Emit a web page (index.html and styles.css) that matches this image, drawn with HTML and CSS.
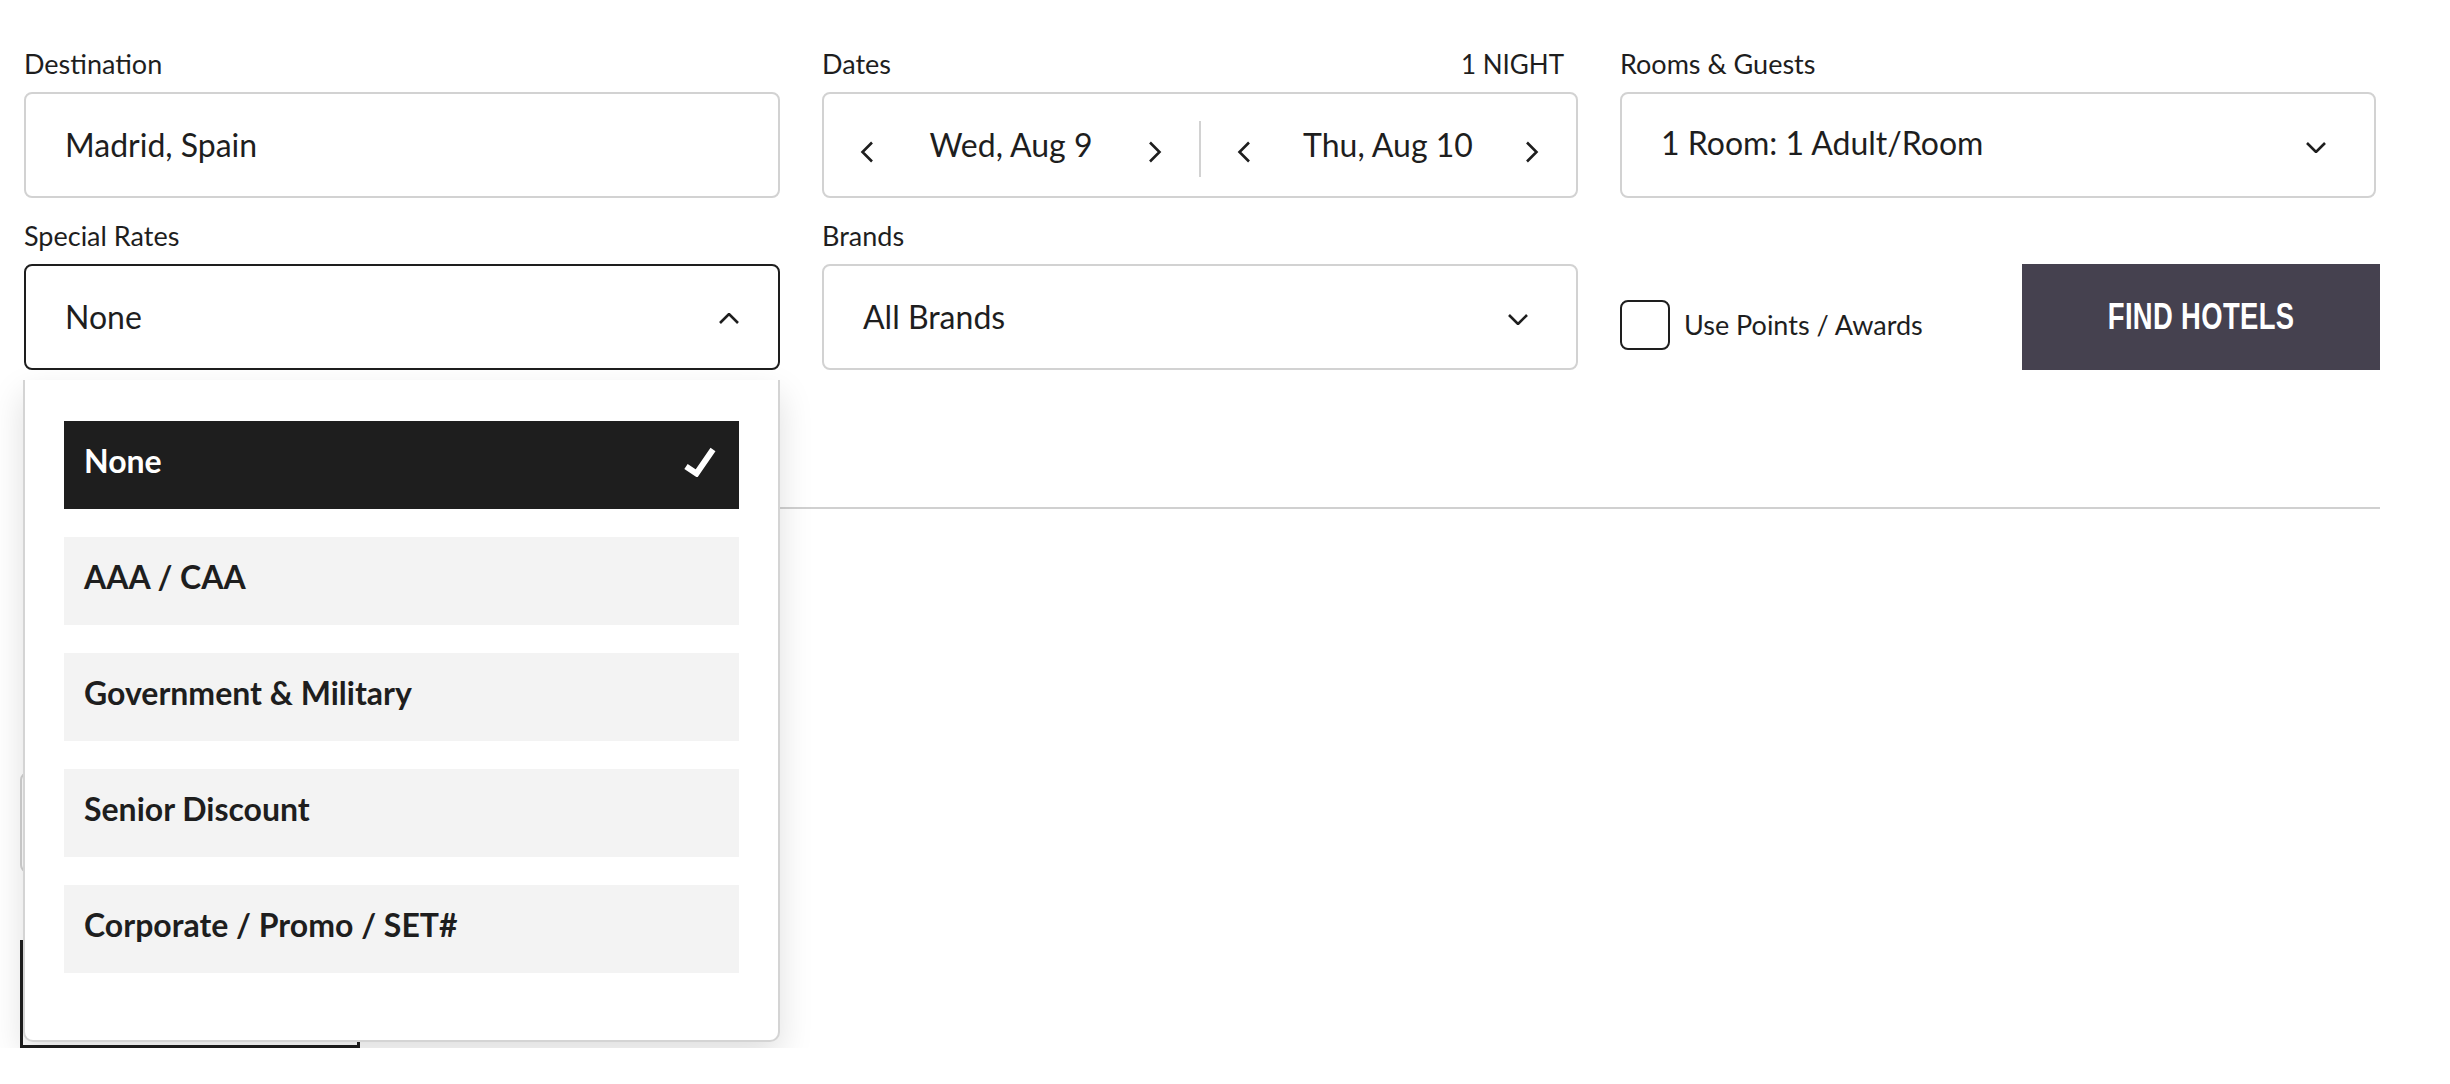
FILE: index.html
```
<!DOCTYPE html>
<html lang="en">
<head>
<meta charset="utf-8">
<title>Find Hotels</title>
<link rel="stylesheet" href="styles.css">
</head>
<body>
<div class="page">
  <form class="search">
    <div class="grid">
      <div class="field">
        <div class="label-row"><span class="label">Destination</span></div>
        <div class="box"><span class="value">Madrid, Spain</span></div>
      </div>

      <div class="field">
        <div class="label-row"><span class="label">Dates</span><span class="label nights">1 NIGHT</span></div>
        <div class="box dates">
          <div class="date-half">
            <svg class="chev-side" viewBox="0 0 14 22" width="14" height="22"><path d="M12 1.5 L2.5 11 L12 20.5"/></svg>
            <span class="date">Wed, Aug 9</span>
            <svg class="chev-side" viewBox="0 0 14 22" width="14" height="22"><path d="M2 1.5 L11.5 11 L2 20.5"/></svg>
          </div>
          <div class="divider"></div>
          <div class="date-half">
            <svg class="chev-side" viewBox="0 0 14 22" width="14" height="22"><path d="M12 1.5 L2.5 11 L12 20.5"/></svg>
            <span class="date">Thu, Aug 10</span>
            <svg class="chev-side" viewBox="0 0 14 22" width="14" height="22"><path d="M2 1.5 L11.5 11 L2 20.5"/></svg>
          </div>
        </div>
      </div>

      <div class="field">
        <div class="label-row"><span class="label">Rooms &amp; Guests</span></div>
        <div class="box select"><span class="value raised">1 Room: 1 Adult/Room</span>
          <svg class="chev" viewBox="0 0 20 11" width="20" height="11"><path d="M1 1 L10 10 L19 1"/></svg>
        </div>
      </div>

      <div class="field special">
        <div class="label-row"><span class="label">Special Rates</span></div>
        <div class="box select open"><span class="value">None</span>
          <svg class="chev chev-up" viewBox="0 0 20 11" width="20" height="11"><path d="M1 10 L10 1 L19 10"/></svg>
        </div>
        <ul class="menu">
          <li class="option selected"><span>None</span>
            <svg class="check" viewBox="0 0 32 30" width="32" height="30"><path d="M2 19.5 L12.5 26.5 L29 2.5"/></svg>
          </li>
          <li class="option"><span>AAA / CAA</span></li>
          <li class="option"><span>Government &amp; Military</span></li>
          <li class="option"><span>Senior Discount</span></li>
          <li class="option"><span>Corporate / Promo / SET#</span></li>
        </ul>
      </div>

      <div class="field">
        <div class="label-row"><span class="label">Brands</span></div>
        <div class="box select"><span class="value">All Brands</span>
          <svg class="chev" viewBox="0 0 20 11" width="20" height="11"><path d="M1 1 L10 10 L19 1"/></svg>
        </div>
      </div>

      <div class="field actions">
        <label class="points"><span class="checkbox"></span><span class="points-text">Use Points / Awards</span></label>
        <button type="button" class="find"><span class="find-text">FIND HOTELS</span></button>
      </div>
    </div>

    <div class="rule"></div>

    <div class="below">
      <div class="ghost-input"></div>
      <div class="ghost-button"></div>
    </div>
  </form>
</div>
</body>
</html>
```
FILE: styles.css
```
* { box-sizing: border-box; }

html, body {
  margin: 0;
  padding: 0;
  background: #ffffff;
}

body {
  font-family: "Lato", "Liberation Sans", Arial, sans-serif;
  color: #1e1e1e;
}

.page {
  padding: 48px 0 0 24px;
  width: 2380px;
}

.grid {
  display: grid;
  grid-template-columns: 756px 756px 756px;
  column-gap: 42px;
  row-gap: 22px;
}

.field {
  display: flex;
  flex-direction: column;
}

.label-row {
  display: flex;
  justify-content: space-between;
  align-items: center;
  height: 32px;
  margin-bottom: 12px;
}

.label {
  font-size: 27px;
  line-height: 32px;
  color: #1e1e1e;
}

.nights {
  font-size: 26px;
  padding-right: 14px;
}

.box {
  height: 106px;
  border: 2px solid #d2d2d2;
  border-radius: 8px;
  display: flex;
  align-items: center;
  padding: 0 39px;
  background: #fff;
}

.value {
  font-size: 32px;
  line-height: 40px;
  color: #1e1e1e;
}

.value.raised {
  margin-top: -4px;
}

.select {
  justify-content: space-between;
}

.select .chev {
  fill: none;
  stroke: #1e1e1e;
  stroke-width: 2.6;
  margin-top: 4px;
  margin-right: 9px;
}

.select .chev-up {
  margin-right: 0;
  margin-top: 2px;
}

.open {
  border-color: #1e1e1e;
}

.dates {
  padding: 0;
}

.date-half {
  flex: 1;
  display: flex;
  align-items: center;
  padding: 0 37px 0 36px;
}

.date {
  flex: 1;
  text-align: center;
  font-size: 32px;
  line-height: 40px;
}

.chev-side {
  fill: none;
  stroke: #1e1e1e;
  stroke-width: 2.6;
  margin-top: 14px;
}

.divider {
  width: 2px;
  height: 56px;
  background: #d2d2d2;
  margin-top: 8px;
}

/* dropdown */
.special {
  position: relative;
}

.menu {
  position: absolute;
  top: 160px;
  left: -1px;
  width: 757px;
  margin: 0;
  list-style: none;
  padding: 41px 39px 67px 39px;
  background: #fff;
  border: 2px solid #d4d4d4;
  border-top: none;
  border-radius: 0 0 10px 10px;
  box-shadow: 0 14px 34px rgba(0, 0, 0, 0.13);
  z-index: 10;
  display: flex;
  flex-direction: column;
  gap: 28px;
}

.option {
  height: 88px;
  background: #f3f3f3;
  display: flex;
  align-items: center;
  justify-content: space-between;
  padding: 0 23px 0 20px;
  font-weight: 700;
  font-size: 32px;
  color: #1e1e1e;
}

.option span {
  margin-top: -9px;
}

.option.selected {
  background: #1e1e1e;
  color: #fff;
}

.check {
  fill: none;
  stroke: #fff;
  stroke-width: 6;
  stroke-linejoin: miter;
  margin-top: -6px;
}

/* actions */
.actions {
  flex-direction: row;
  align-items: center;
  align-self: end;
  height: 106px;
  margin-right: -4px;
}

.points {
  display: flex;
  align-items: center;
  margin-top: 16px;
}

.checkbox {
  width: 50px;
  height: 50px;
  border: 2px solid #1e1e1e;
  border-radius: 8px;
  margin-right: 14px;
  flex: none;
}

.points-text {
  font-size: 27px;
  line-height: 32px;
}

.find {
  margin-left: auto;
  width: 358px;
  height: 106px;
  border: none;
  background: #45414f;
  color: #fff;
  padding: 0;
  display: flex;
  align-items: center;
  justify-content: center;
}

.find-text {
  display: inline-block;
  font-family: "Liberation Sans", Arial, sans-serif;
  font-weight: 700;
  font-size: 37px;
  line-height: 40px;
  letter-spacing: 0.5px;
  transform: scaleX(0.74);
  white-space: nowrap;
}

.rule {
  height: 2px;
  background: #d0d0d0;
  margin-top: 137px;
  width: 2356px;
}

.below {
  display: flex;
  flex-direction: column;
  align-items: flex-start;
  margin-left: -4px;
}

.ghost-input {
  margin-top: 263px;
  width: 700px;
  height: 101px;
  border: 2px solid #d2d2d2;
  border-radius: 8px;
}

.ghost-button {
  margin-top: 67px;
  width: 340px;
  height: 108px;
  border: 3px solid #1e1e1e;
}
```
